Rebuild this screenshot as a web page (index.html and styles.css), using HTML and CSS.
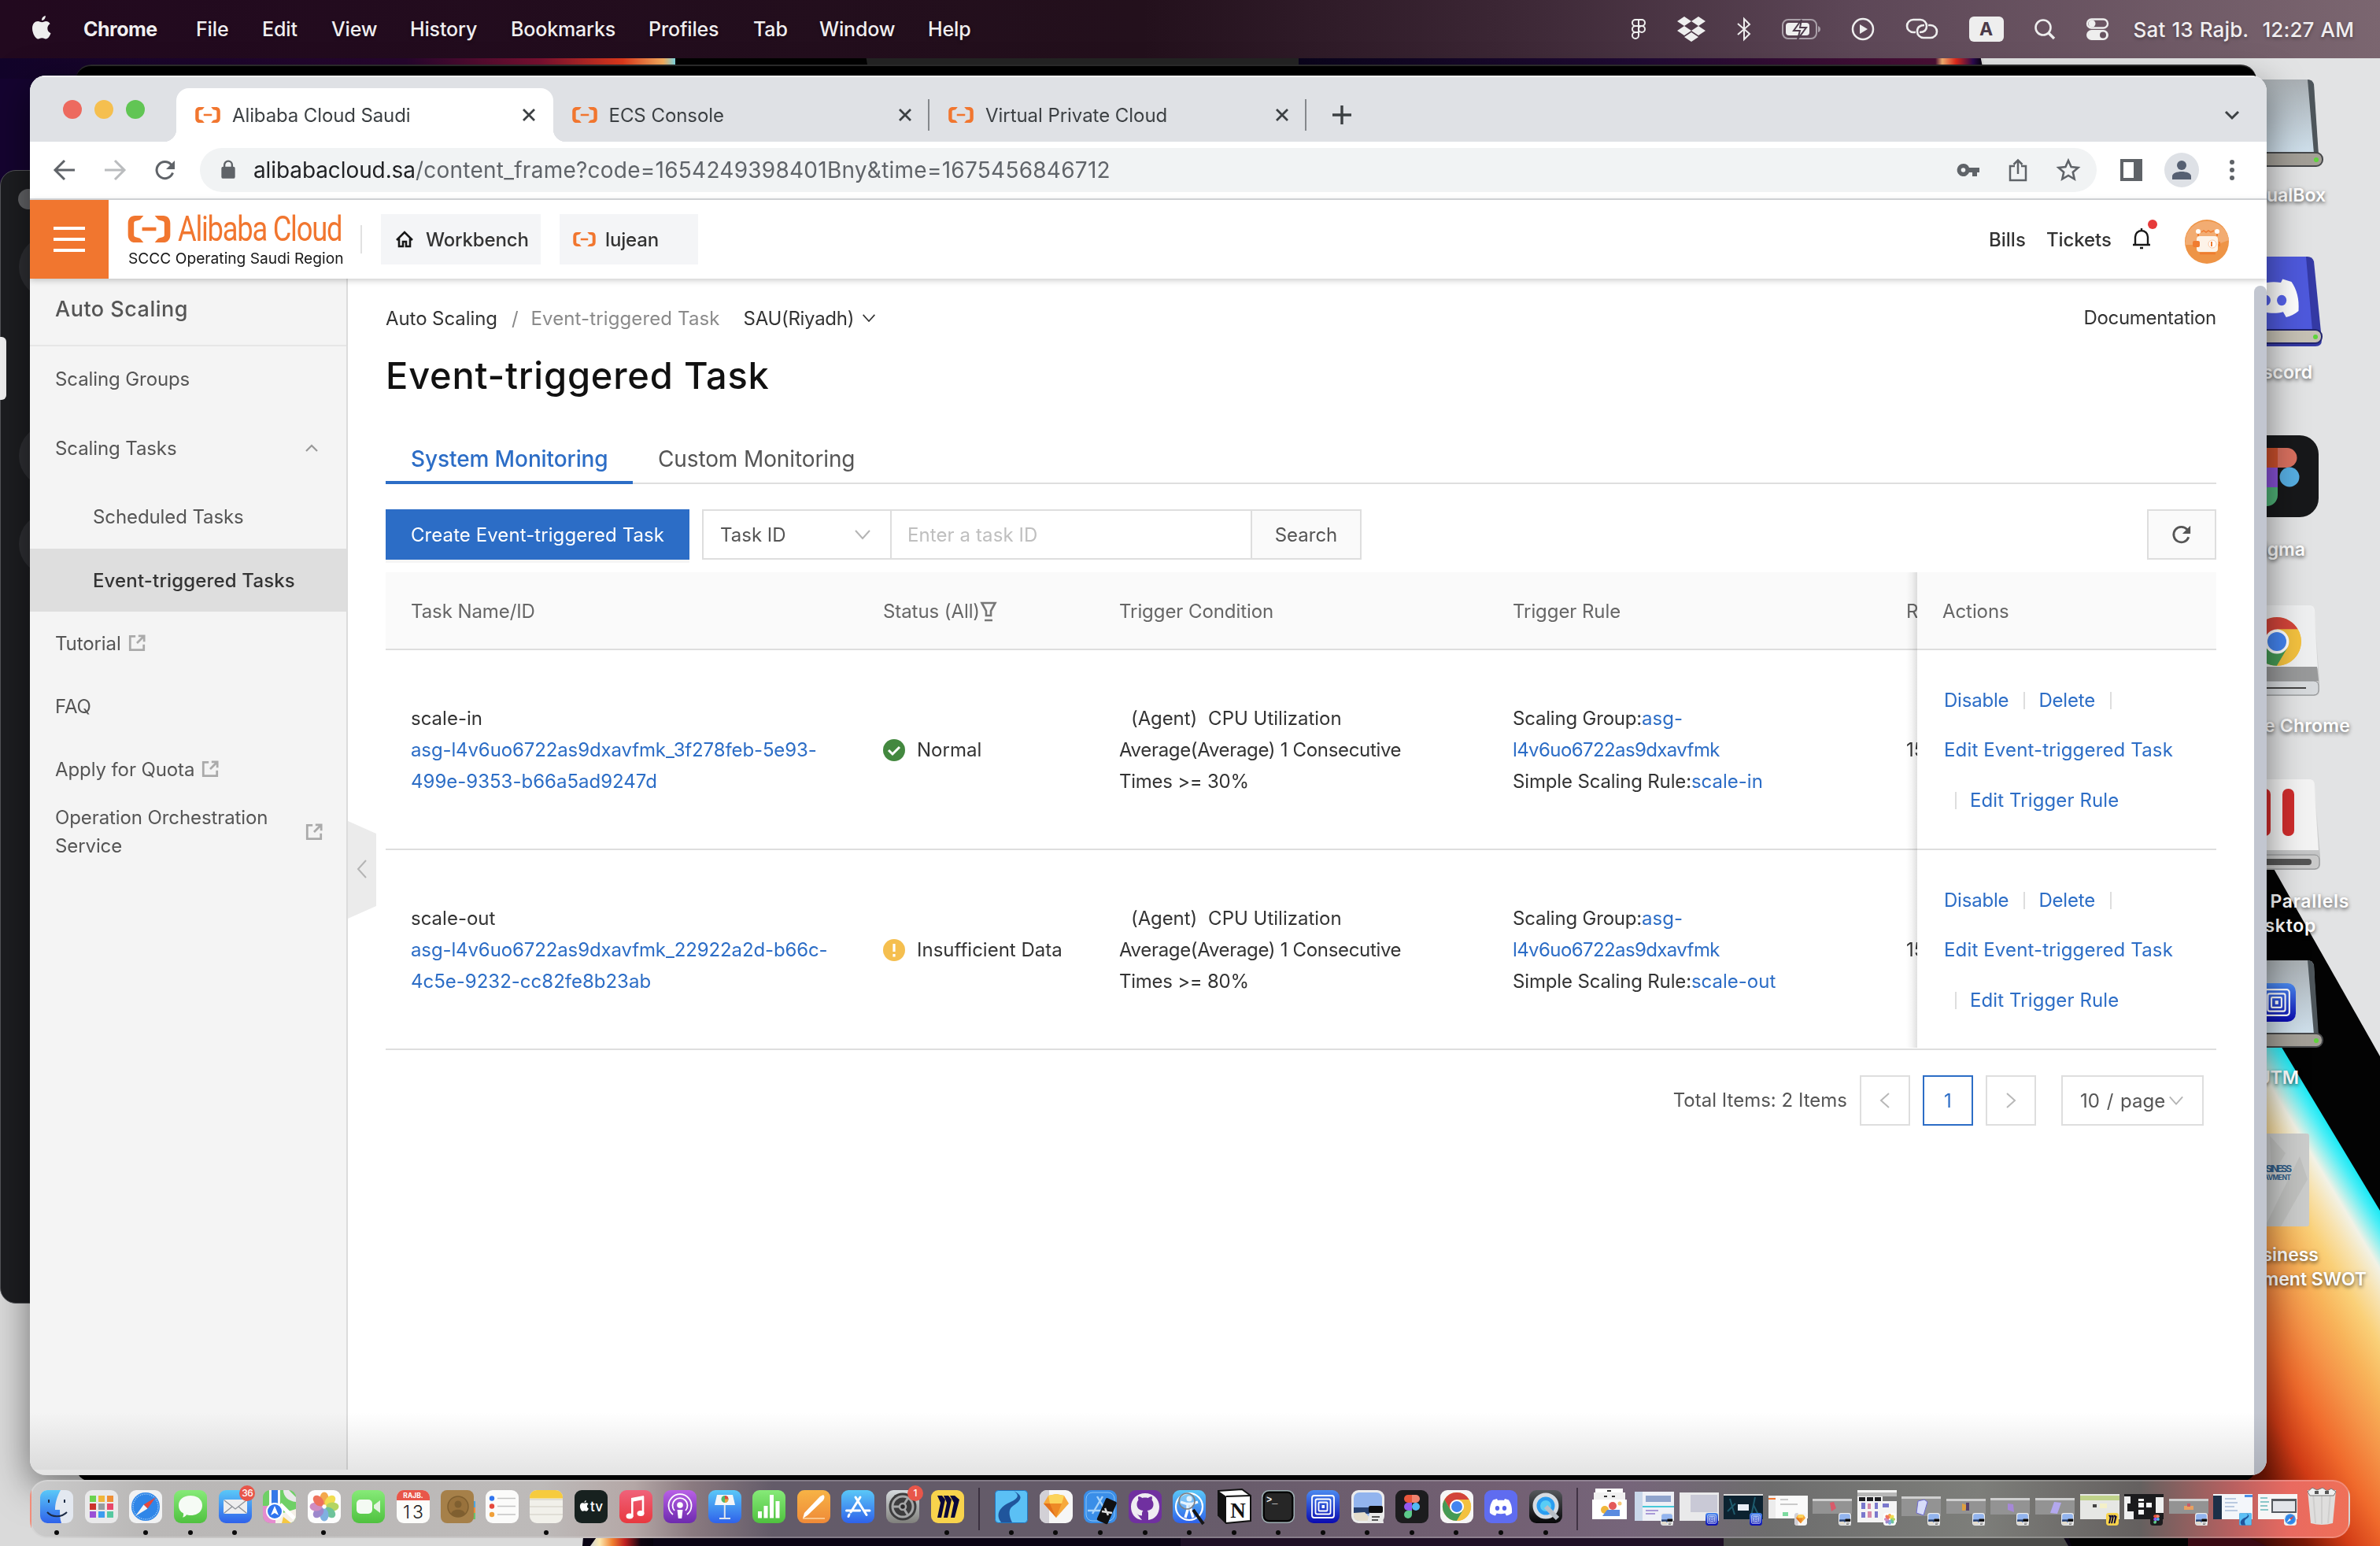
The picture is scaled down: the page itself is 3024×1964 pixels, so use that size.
FILE: index.html
```html
<!DOCTYPE html>
<html lang="en">
<head>
<meta charset="utf-8">
<title>Alibaba Cloud Saudi</title>
<link rel="stylesheet" href="styles.css">
</head>
<body>
<svg class="defs" width="0" height="0" aria-hidden="true">
  <defs>
    <linearGradient id="gBlue" x2="0" y2="1"><stop offset="0" stop-color="#5ac8f8"/><stop offset="1" stop-color="#2f62ea"/></linearGradient>
    <linearGradient id="gGreen" x2="0" y2="1"><stop offset="0" stop-color="#86ea78"/><stop offset="1" stop-color="#4fc13f"/></linearGradient>
    <linearGradient id="gRed" x2="0" y2="1"><stop offset="0" stop-color="#f0627a"/><stop offset="1" stop-color="#e8383f"/></linearGradient>
    <linearGradient id="gPurple" x2="0" y2="1"><stop offset="0" stop-color="#b860e6"/><stop offset="1" stop-color="#6d2aae"/></linearGradient>
    <linearGradient id="gOrange" x2="0" y2="1"><stop offset="0" stop-color="#f7b345"/><stop offset="1" stop-color="#ef8a38"/></linearGradient>
    <linearGradient id="gUtm" x2="0" y2="1"><stop offset="0" stop-color="#4a8af0"/><stop offset="1" stop-color="#0a0ab0"/></linearGradient>
    <linearGradient id="gMetal" x2="0" y2="1"><stop offset="0" stop-color="#d5dadd"/><stop offset="1" stop-color="#80807c"/></linearGradient>
    <linearGradient id="gDark" x2="0" y2="1"><stop offset="0" stop-color="#55585c"/><stop offset="1" stop-color="#060608"/></linearGradient>
    <linearGradient id="gDrive" x2="0" y2="1"><stop offset="0" stop-color="#a9afb3"/><stop offset="1" stop-color="#cfe0ec"/></linearGradient>
    <linearGradient id="gPlastic" x2="0" y2="1"><stop offset="0" stop-color="#f4f4f4"/><stop offset="1" stop-color="#b9babb"/></linearGradient>
    <linearGradient id="gTop" gradientUnits="userSpaceOnUse" x1="0" y1="0" x2="860" y2="0"><stop offset="0" stop-color="#12042a"/><stop offset=".6" stop-color="#26062e"/><stop offset=".8" stop-color="#7a1030"/><stop offset=".92" stop-color="#e03a1c"/><stop offset=".98" stop-color="#f8b060"/><stop offset="1" stop-color="#70e0f8"/></linearGradient>
    <linearGradient id="gTop2" gradientUnits="userSpaceOnUse" x1="1650" y1="0" x2="2520" y2="0"><stop offset="0" stop-color="#0a041c"/><stop offset=".5" stop-color="#200a34"/><stop offset=".93" stop-color="#4a0f35"/><stop offset=".94" stop-color="#f6b070"/><stop offset=".96" stop-color="#e02a1c"/><stop offset=".985" stop-color="#2a0a50"/><stop offset="1" stop-color="#000"/></linearGradient>
    <linearGradient id="gBand" gradientUnits="userSpaceOnUse" x1="3024" y1="1538" x2="2697" y2="1733"><stop offset="0" stop-color="#18e8f4"/><stop offset=".03" stop-color="#4ceef6"/><stop offset=".1" stop-color="#f2f2e6"/><stop offset=".16" stop-color="#f8e2ae"/><stop offset=".23" stop-color="#fad078"/><stop offset=".32" stop-color="#f8b45a"/><stop offset=".42" stop-color="#f59448"/><stop offset=".54" stop-color="#f06a2c"/><stop offset=".66" stop-color="#d23c16"/><stop offset=".78" stop-color="#7a1806"/><stop offset="1" stop-color="#140208"/></linearGradient>
    <linearGradient id="gFoot" gradientUnits="userSpaceOnUse" x1="750" y1="0" x2="830" y2="0"><stop offset="0" stop-color="#d0d0d0"/><stop offset=".15" stop-color="#fbe8b0"/><stop offset=".35" stop-color="#f08030"/><stop offset=".55" stop-color="#c02020"/><stop offset=".8" stop-color="#100410"/><stop offset="1" stop-color="#06020c"/></linearGradient>

    <symbol id="ali" viewBox="2 1.500 30 19"><path d="M12 1.500H7C4 1.500 2 3.500 2 7v8c0 3.500 2 5.500 5 5.500h6l-2.500-3-3-.8c-.9-.2-1.300-.7-1.300-1.500V6.800c0-.8.400-1.300 1.300-1.500l3-.8 2.500-3zM22 1.500h5c3 0 5 2 5 5.500v8c0 3.500-2 5.500-5 5.500h-6l2.500-3 3-.8c.9-.2 1.300-.7 1.300-1.500V6.800c0-.8-.4-1.300-1.300-1.500l-3-.8-2.500-3zM12 9.800h10v2.400H12z" fill="#f1762f"/></symbol>
    <symbol id="x" viewBox="0 0 18 18"><path d="M2 2l14 14M16 2L2 16" stroke="#3c4043" stroke-width="2.800"/></symbol>
    <symbol id="down" viewBox="0 0 22 14"><path d="M2 2l9 10 9-10" fill="none" stroke="currentColor" stroke-width="2"/></symbol>
    <symbol id="left" viewBox="0 0 14 22"><path d="M12 2L2 11l10 9" fill="none" stroke="currentColor" stroke-width="2"/></symbol>
    <symbol id="ext" viewBox="0 0 24 24"><path d="M10 2.500H2.500v19h19V14M14 2h8v8M21 3l-9 9" fill="none" stroke="#aaa" stroke-width="3"/></symbol>
    <symbol id="reload" viewBox="0 0 28 28"><path d="M23.500 17.500A10.500 10.500 0 1 1 21.500 7.200l2 2.300" fill="none" stroke="currentColor" stroke-width="3"/><path d="M26 2v11H15z" fill="currentColor"/></symbol>
    <symbol id="apple" viewBox="0 0 26 32"><path d="M18.500 8c-2.300 0-3.800 1.300-5.200 1.300S10.200 8 8.200 8C4.500 8 1 11.200 1 17c0 6.500 4.300 13.500 7.500 13.500 1.800 0 2.700-1.200 4.900-1.200 2.200 0 2.900 1.200 4.800 1.200 2.800 0 5.500-4.600 6.300-7.300-2.800-1.200-4.200-3.300-4.200-6.100 0-2.500 1.300-4.600 3.300-5.900C22.300 9 20.600 8 18.500 8zM17.800 1c-2.700.4-5 2.900-4.700 6 2.700 0 5-2.900 4.700-6z" fill="currentColor"/></symbol>
    <symbol id="utmI" viewBox="0 0 42 42"><rect width="42" height="42" rx="9" fill="url(#gUtm)"/><g fill="none" stroke="#fff" stroke-width="1.800"><rect x="7" y="7" width="28" height="28" rx="3"/><rect x="11.500" y="11.500" width="19" height="19" rx="2"/><rect x="15.500" y="15.500" width="11" height="11" rx="1"/></g><rect x="19.500" y="19" width="3.500" height="4" fill="#fff"/></symbol>
    <symbol id="prevI" viewBox="0 0 42 42"><rect width="42" height="42" rx="9" fill="#ececec"/><rect x="3" y="3" width="36" height="36" rx="7" fill="#92b4ee"/><path d="M3 22h36v8H3z" fill="#27406f"/><path d="M3 29l14-1 10 11H10q-7 0-7-7z" fill="#e4dccb"/><path d="M23 20h16v9l2 13H20l3-13z" fill="#e8e8e8"/><rect x="22" y="20" width="18" height="9" rx="2" fill="#0c0c0e"/><path d="M26 34h10M26 38h8" stroke="#555" stroke-width="2"/></symbol>
    <symbol id="figI" viewBox="0 0 42 42"><rect width="42" height="42" rx="9" fill="#1c1c1e"/><path d="M21 6h-5a5 5 0 0 0 0 10h5z" fill="#e9573c"/><path d="M21 6h5a5 5 0 0 1 0 10h-5z" fill="#f0836f"/><path d="M21 16h-5a5 5 0 0 0 0 10h5z" fill="#9459ee"/><circle cx="26" cy="21" r="5" fill="#53b8f2"/><path d="M21 26h-5a5 5 0 1 0 5 5z" fill="#5cc98a"/></symbol>
    <symbol id="sketchI" viewBox="0 0 42 42"><rect width="42" height="42" rx="9" fill="#f6f6f6"/><path d="M0 9a9 9 0 0 1 9-9h3v42H9a9 9 0 0 1-9-9z" fill="#d2d0d6"/><path d="M11 7l10-2 10 2 6 10-16 18L5 17z" fill="#f7a93b"/><path d="M11 7l10-2 10 2-3 10H13z" fill="#fcd45a"/><path d="M13 17h15l-7 18z" fill="#ee8a26"/><path d="M5 17h8l8 18z" fill="#e2701c"/></symbol>
    <symbol id="miroI" viewBox="0 0 42 42"><rect width="42" height="42" rx="9" fill="#f8d34c"/><path d="M8 7h6l4 5-5 23H8l4-19zM16 7h6l4 5-5 23h-5l4-19zM24 7h6l6 5-6 23h-5l4-19z" fill="#0a083a"/></symbol>
    <symbol id="codeI" viewBox="0 0 42 42"><rect x=".5" y=".5" width="41" height="41" rx="4" fill="#5bc0f5" stroke="#2177c0"/><path d="M24 1c16 8 6 14-2 20-5 4-4 12 0 20H8C1 32 5 23 16 17c11-5 18-9 8-16z" fill="#20559c"/></symbol>
    <symbol id="safI" viewBox="0 0 42 42"><rect width="42" height="42" rx="9" fill="#f1f2f3"/><circle cx="21" cy="21" r="18" fill="#2f86e8"/><circle cx="21" cy="21" r="16" fill="none" stroke="#a9d2f8" stroke-width="1.500" stroke-dasharray="1 1.500"/><path d="M34 9L18.500 18.500l5 5z" fill="#e5483c"/><path d="M8 33l10.500-14.500 5 5z" fill="#f4f4f4"/></symbol>
    <symbol id="phI" viewBox="0 0 42 42"><rect width="42" height="42" rx="9" fill="#fdfdfd"/><g opacity=".85"><ellipse cx="21" cy="10.500" rx="5.500" ry="8" fill="#f29a2e"/><ellipse cx="21" cy="10.500" rx="5.500" ry="8" fill="#f0d832" transform="rotate(45 21 21)"/><ellipse cx="21" cy="10.500" rx="5.500" ry="8" fill="#a8cf48" transform="rotate(90 21 21)"/><ellipse cx="21" cy="10.500" rx="5.500" ry="8" fill="#56b98a" transform="rotate(135 21 21)"/><ellipse cx="21" cy="10.500" rx="5.500" ry="8" fill="#6aa3dc" transform="rotate(180 21 21)"/><ellipse cx="21" cy="10.500" rx="5.500" ry="8" fill="#8d74c4" transform="rotate(225 21 21)"/><ellipse cx="21" cy="10.500" rx="5.500" ry="8" fill="#c87ab8" transform="rotate(270 21 21)"/><ellipse cx="21" cy="10.500" rx="5.500" ry="8" fill="#ec5a42" transform="rotate(315 21 21)"/></g></symbol>
    <symbol id="chr" viewBox="0 0 42 42"><circle cx="21" cy="21" r="18" fill="#e8b73a"/><path d="M5.400 12A18 18 0 0 1 36.600 12H21l-8 13.500z" fill="#d2443a"/><path d="M5.400 12A18 18 0 0 0 21 39l8-13.500H13z" fill="#459a55"/><path d="M21 39A18 18 0 0 0 36.600 12H21l8 13.500z" fill="#f3c13f"/><circle cx="21" cy="21" r="9" fill="#fff"/><circle cx="21" cy="21" r="7" fill="#4384f0"/></symbol>
    <symbol id="disc" viewBox="0 0 30 24"><path d="M10 2L5 3.500C2 8 .5 13 1 20c2 1.800 4.500 3 7 3.500l1.700-3c3.500 1 7.100 1 10.600 0l1.700 3c2.500-.5 5-1.700 7-3.500.5-7-1-12-4-16.500L20 2l-1 2c-2.700-.4-5.300-.4-8 0z" fill="#fff"/><ellipse cx="10.500" cy="14" rx="2.700" ry="3" fill="#5562ea"/><ellipse cx="19.500" cy="14" rx="2.700" ry="3" fill="#5562ea"/></symbol>
  </defs>
</svg>

<div class="desktop">
  <svg class="wallpaper" viewBox="0 0 3024 1964">
    <rect width="3024" height="1964" fill="#dadada"/>
    <path d="M0 0h160v430H0z" fill="#150430"/>
    <path d="M0 70h860v30H0z" fill="url(#gTop)"/>
    <path d="M858 70h800v30H858z" fill="#020202"/>
    <path d="M1100 70h550v30h-545z" fill="#242424"/>
    <path d="M1650 70h866l6 30H1650z" fill="url(#gTop2)"/>
    <path d="M2520 70h504v1300H2600z" fill="#e2e3e4"/>
    <path d="M2700 770L3024 1342V1560L2880 1420z" fill="#030303"/>
    <path d="M2800 1166L3024 1538V1964H2800z" fill="url(#gBand)"/>
    <path d="M750 1850h2050v114H740z" fill="#0a0414"/>
    <path d="M760 1950h70v14h-80z" fill="url(#gFoot)"/>
    <path d="M1500 1950h700v14h-700z" fill="#1f1026"/>
    <path d="M2190 1950h430l8 14h-438z" fill="#4a4a48"/>
    <path d="M2627 1950h160v14h-155z" fill="#030303"/>
    <path d="M2780 1950h70l30 14h-100z" fill="#3a0a14"/>
  </svg>

  <div class="shortcut s1"><svg viewBox="0 0 130 120"><path d="M0 4h110q6 0 8 6l4 88H0z" fill="url(#gDrive)"/><path d="M110 4q6 0 8 6l6 90-6-2z" fill="#4d555a"/><rect x="-20" y="97" width="149" height="17" rx="8" fill="#a39f97" stroke="#46484a" stroke-width="2"/><circle cx="121" cy="106" r="3" fill="#5fd43c"/></svg><p>VirtualBox</p></div>
  <div class="shortcut s2"><svg viewBox="0 0 130 120"><path d="M0 4h110q6 0 8 6l10 100q0 8-8 8H0z" fill="#3439a4"/><path d="M0 4h108l8 94H0z" fill="#4e59dc"/><use href="#disc" x="30" y="28" width="74" height="54"/><rect x="-20" y="97" width="148" height="17" rx="8" fill="#c5c0b4" stroke="#22256e" stroke-width="2"/><circle cx="120" cy="106" r="3" fill="#5fd43c"/></svg><p>Discord</p></div>
  <div class="shortcut s3"><svg viewBox="0 0 130 120"><rect x="0" y="8" width="124" height="104" rx="24" fill="#17181a"/><path d="M72 24h12a12 12 0 0 1 0 25H72z" fill="#d9705f"/><path d="M72 24H50v25h22z" fill="#c94f2c"/><path d="M50 49h22v25H50z" fill="#8650d4"/><circle cx="87" cy="61" r="12.500" fill="#57aee2"/><path d="M50 74h22v10a14 14 0 0 1-14 14z" fill="#4fb277"/></svg><p>Figma</p></div>
  <div class="shortcut s4"><svg viewBox="0 0 130 120"><path d="M0 2h112q6 0 7 6l6 92v10q0 7-7 7H0z" fill="url(#gPlastic)"/><path d="M0 2h112q5 0 6 6l5 74H0z" fill="#eeeff0"/><path d="M0 80h122l2 18H0z" fill="#98999a"/><rect x="-20" y="98" width="144" height="18" rx="6" fill="#d6d9dc" stroke="#8c8e90"/><path d="M0 107h108" stroke="#444" stroke-width="2"/><use href="#chr" x="35" y="12" width="72" height="72"/></svg><p>Google Chrome</p></div>
  <div class="shortcut s5"><svg viewBox="0 0 130 120"><path d="M0 2h112q6 0 7 6l7 92v10q0 7-7 7H0z" fill="url(#gPlastic)"/><path d="M0 2h112q5 0 6 6l6 84H0z" fill="#f3f3f3"/><rect x="48" y="14" width="15" height="60" rx="7" fill="#cf2c2c"/><rect x="78" y="14" width="15" height="60" rx="7" fill="#cf2c2c"/><rect x="-20" y="98" width="145" height="18" rx="6" fill="#c9c9c9" stroke="#8c8e90"/><rect x="-10" y="103" width="125" height="8" rx="4" fill="#555"/></svg><p>Parallels<br><span class="nudge">Desktop</span></p></div>
  <div class="shortcut s6"><svg viewBox="0 0 130 120"><path d="M0 4h110q6 0 8 6l4 88H0z" fill="url(#gDrive)"/><path d="M110 4q6 0 8 6l6 90-6-2z" fill="#4d555a"/><use href="#utmI" x="46" y="33" width="49" height="49"/><rect x="-20" y="97" width="149" height="17" rx="8" fill="#a39f97" stroke="#46484a" stroke-width="2"/><circle cx="121" cy="106" r="3" fill="#5fd43c"/></svg><p>UTM</p></div>
  <div class="shortcut s7"><svg viewBox="0 0 130 120"><rect x="0" y="1" width="112" height="118" rx="3" fill="#cbcccb"/><path d="M62 4l20 22-18 30zM100 30l-44 89h20l34-60z" fill="#c0c1bf"/><text x="50" y="50" font-size="12" font-weight="700" fill="#2f5c86" textLength="40">USINESS</text><text x="50" y="60" font-size="8.500" font-weight="700" fill="#2f5c86" textLength="39">EAVMENT</text></svg><p><span class="nudge2">Business</span><br>ment SWOT</p></div>

  <div class="back-window"></div>
  <div class="side-window"><i></i><i></i><i></i><i></i></div>
  <div class="side-pill"></div>

  <header class="menubar">
    <nav class="menu">
      <svg class="apple" viewBox="0 0 26 32"><use href="#apple"/></svg>
      <b>Chrome</b><span>File</span><span>Edit</span><span>View</span><span>History</span><span>Bookmarks</span><span>Profiles</span><span>Tab</span><span>Window</span><span>Help</span>
    </nav>
    <div class="tray">
      <svg width="20" height="28" viewBox="0 0 20 28" fill="none" stroke="#eee" stroke-width="2"><path d="M10 2H6a4 4 0 0 0 0 8h4zM10 2h4a4 4 0 0 1 0 8h-4zM10 10H6a4 4 0 0 0 0 8h4zM10 18H6a4 4 0 1 0 4 4z"/><circle cx="14" cy="14" r="4"/></svg>
      <svg width="38" height="32" viewBox="0 0 38 32" fill="#eee"><path d="M10 0l9 6-9 6-9-6zM28 0l9 6-9 6-9-6zM10 12l9 6-9 6-9-6zM28 12l9 6-9 6-9-6zM19 20l9 6-9 6-9-6z"/></svg>
      <svg width="20" height="30" viewBox="0 0 20 30" fill="none" stroke="#eee" stroke-width="2"><path d="M2 8l15 13-7 7V2l7 7L2 22"/></svg>
      <svg width="50" height="26" viewBox="0 0 50 26"><rect x="1" y="1" width="43" height="24" rx="7" fill="none" stroke="#a99fa8" stroke-width="2"/><rect x="5" y="5" width="30" height="16" rx="4" fill="#eee"/><path d="M46 9v8q3-1 3-4t-3-4z" fill="#a99fa8"/><path d="M25 1L15 15h8l-3 11 11-15h-8z" fill="#eee" stroke="#4d3b4b" stroke-width="2"/></svg>
      <svg width="30" height="30" viewBox="0 0 30 30"><circle cx="15" cy="15" r="13" fill="none" stroke="#eee" stroke-width="2.500"/><path d="M11 9l10 6-10 6z" fill="#eee"/></svg>
      <svg width="44" height="28" viewBox="0 0 44 28" fill="none" stroke="#eee" stroke-width="2.600"><path d="M14 18h-3a8 8 0 0 1 0-16h9a8 8 0 0 1 8 8q0 8-9 8"/><path d="M30 9h3a8 8 0 0 1 0 16h-9a8 8 0 0 1-8-8q0-8 9-8"/></svg>
      <span class="lang">A</span>
      <svg width="28" height="28" viewBox="0 0 28 28" fill="none" stroke="#eee" stroke-width="2.600"><circle cx="12" cy="12" r="9.500"/><path d="M19 19l7 7" stroke-width="3.400"/></svg>
      <svg width="30" height="28" viewBox="0 0 30 28"><rect x="2" y="1.500" width="26" height="11" rx="5.500" fill="none" stroke="#eee" stroke-width="2.400"/><circle cx="8" cy="7" r="4.500" fill="#eee"/><rect x="1" y="15" width="28" height="13" rx="6.500" fill="#eee"/><circle cx="22" cy="21.500" r="4" fill="#66525f"/></svg>
    </div>
    <div class="clock"><span>Sat 13 Rajb.</span><span>12:27 AM</span></div>
  </header>

  <main class="window">
    <div class="tabstrip">
      <div class="lights"><i class="r"></i><i class="y"></i><i class="g"></i></div>
      <div class="tab active"><svg class="fav"><use href="#ali"/></svg><span class="t1">Alibaba Cloud Saudi</span><svg class="close"><use href="#x"/></svg></div>
      <div class="tab"><svg class="fav"><use href="#ali"/></svg><span>ECS Console</span><svg class="close"><use href="#x"/></svg></div>
      <div class="tab"><svg class="fav"><use href="#ali"/></svg><span>Virtual Private Cloud</span><svg class="close"><use href="#x"/></svg></div>
      <svg class="plus" viewBox="0 0 24 24"><path d="M12 0v24M0 12h24" stroke="#3c4043" stroke-width="3.400"/></svg>
      <svg class="tabs-more" viewBox="0 0 18 12"><path d="M1 2l8 8 8-8" fill="none" stroke="#3c4043" stroke-width="3"/></svg>
    </div>
    <div class="toolbar">
      <div class="navs">
        <svg viewBox="0 0 28 28"><path d="M27 14H3M14 2L2 14l12 12" fill="none" stroke="#5f6368" stroke-width="3"/></svg>
        <svg viewBox="0 0 28 28"><path d="M1 14h24M14 2l12 12-12 12" fill="none" stroke="#babcbe" stroke-width="3"/></svg>
        <svg class="rl" viewBox="0 0 28 28"><use href="#reload"/></svg>
      </div>
      <div class="omnibox">
        <svg class="lock" viewBox="0 0 18 24"><rect x="1" y="8" width="16" height="14" rx="2" fill="#5f6368"/><path d="M4.500 9V6a4.500 4.500 0 0 1 9 0v3" fill="none" stroke="#5f6368" stroke-width="2.200"/></svg>
        <span class="url"><b>alibabacloud.sa</b>/content_frame?code=1654249398401Bny&amp;time=1675456846712</span>
        <svg class="key" viewBox="0 0 30 18"><path d="M8.500 1a8 8 0 1 0 7.500 11h4v5h6v-5h3V6H16a8 8 0 0 0-7.500-5zm0 5.200a2.800 2.800 0 1 1 0 5.600 2.800 2.800 0 0 1 0-5.600z" fill="#5f6368"/></svg>
        <svg class="share" viewBox="0 0 24 30"><path d="M8 10H2v18h20V10h-6M12 20V3M6.500 8L12 2.500 17.500 8" fill="none" stroke="#5f6368" stroke-width="2.500"/></svg>
        <svg class="star" viewBox="0 0 30 30"><path d="M15 3l3.600 8.100 8.800.8-6.600 5.900 1.900 8.700L15 22l-7.700 4.500 1.900-8.700-6.600-5.900 8.800-.8z" fill="none" stroke="#5f6368" stroke-width="2.600"/></svg>
      </div>
      <svg class="panel" viewBox="0 0 28 28"><path d="M0 0h28v28H0zM4 4v20h13V4z" fill="#5f6368" fill-rule="evenodd"/></svg>
      <span class="user"><svg viewBox="0 0 24 24"><circle cx="12" cy="6" r="6" fill="#566072"/><path d="M0 24v-4c0-8 24-8 24 0v4z" fill="#566072"/></svg></span>
      <svg class="dots" viewBox="0 0 6 26"><circle cx="3" cy="3" r="3"/><circle cx="3" cy="13" r="3"/><circle cx="3" cy="23" r="3"/></svg>
    </div>

    <div class="appbar">
      <div class="burger"><i></i><i></i><i></i></div>
      <div class="brand">
        <div class="logo"><svg><use href="#ali"/></svg><span>Alibaba Cloud</span></div>
        <div class="region">SCCC Operating Saudi Region</div>
      </div>
      <div class="sep"></div>
      <div class="chip wb"><svg viewBox="0 0 24 24"><path d="M2 13L12 3l10 10M5 11v10h5v-6h4v6h5V11" fill="none" stroke="#181818" stroke-width="2.600"/></svg>Workbench</div>
      <div class="chip lj"><svg><use href="#ali"/></svg>lujean</div>
      <div class="spacer"></div>
      <div class="link bills">Bills</div><div class="link tickets">Tickets</div>
      <div class="bell"><svg viewBox="0 0 24 28"><path d="M4 22V12a8 8 0 0 1 16 0v10M1 22h22M12 1v3M10 26h4" fill="none" stroke="#181818" stroke-width="2.400"/></svg><i></i></div>
      <svg class="ava" viewBox="0 0 56 56"><circle cx="28" cy="28" r="28" fill="#ee9446"/><path d="M2 20A28 28 0 0 1 56 26L40 32 0 32z" fill="#f2ac72"/><rect x="15" y="21" width="27" height="20" rx="4" fill="#fdf3e8"/><path d="M17 21v-5M41 21v-5" stroke="#f07c30" stroke-width="2"/><circle cx="17" cy="15" r="3" fill="#fff"/><circle cx="41" cy="15" r="3" fill="#fff"/><path d="M21 16l3-2 3 2 3-2 3 2 4-2" fill="none" stroke="#f07c30" stroke-width="1.500"/><rect x="10" y="27" width="9" height="8" rx="2" fill="#f07c30"/><circle cx="35" cy="31" r="5" fill="#fff" stroke="#f9c8a4"/><path d="M34 28v6M44 28v6" stroke="#f07c30" stroke-width="2"/><path d="M19 43h20" stroke="#f07c30" stroke-width="2.500"/></svg>
    </div>

    <div class="body">
      <aside class="sidebar">
        <div class="side-title">Auto Scaling</div>
        <div class="item first">Scaling Groups</div>
        <div class="item second between"><span>Scaling Tasks</span><svg class="caret" viewBox="0 0 16 10"><path d="M1 9l7-7 7 7" fill="none" stroke="#999" stroke-width="2.200"/></svg></div>
        <div class="item third sub">Scheduled Tasks</div>
        <div class="item sub on">Event-triggered Tasks</div>
        <div class="item">Tutorial <svg class="ext"><use href="#ext"/></svg></div>
        <div class="item">FAQ</div>
        <div class="item">Apply for Quota <svg class="ext"><use href="#ext"/></svg></div>
        <div class="item two between"><span>Operation Orchestration<br>Service</span><svg class="ext"><use href="#ext"/></svg></div>
      </aside>
      <section class="content">
        <div class="crumbs"><span>Auto Scaling</span><i>/</i><em>Event-triggered Task</em><span class="reg">SAU(Riyadh)</span><svg><use href="#down"/></svg><a>Documentation</a></div>
        <h1>Event-triggered Task</h1>
        <div class="tabs"><span class="cur">System Monitoring</span><span>Custom Monitoring</span></div>
        <div class="filters">
          <button class="primary">Create Event-triggered Task</button>
          <div class="select"><span>Task ID</span><svg><use href="#down"/></svg></div>
          <div class="input">Enter a task ID</div>
          <div class="search">Search</div>
          <div class="refresh"><svg viewBox="0 0 28 28"><use href="#reload"/></svg></div>
        </div>
        <div class="table">
          <div class="row head">
            <div>Task Name/ID</div>
            <div class="st">Status (All)<svg viewBox="0 0 20 26"><path d="M1.500 2h17l-5.500 10v6H7v-6zM5 24h10" fill="none" stroke="#777" stroke-width="2.600"/></svg></div>
            <div>Trigger Condition</div><div>Trigger Rule</div><div class="cut">R</div>
            <div class="act"><span class="ah">Actions</span></div>
          </div>
          <div class="row">
            <div><p>scale-in<br><a class="id1">asg-l4v6uo6722as9dxavfmk_3f278feb-5e93-</a><br><a>499e-9353-b66a5ad9247d</a></p></div>
            <div class="st"><svg class="dot" viewBox="0 0 28 28"><circle cx="14" cy="14" r="14" fill="#43883f"/><path d="M7 14l5 5 9-9" fill="none" stroke="#fff" stroke-width="3"/></svg>Normal</div>
            <div><p><span class="ag">(Agent)</span>CPU Utilization<br><span class="tight">Average(Average) 1 Consecutive</span><br><span class="times">Times &gt;= 30%</span></p></div>
            <div><p><span class="sg">Scaling Group:</span><a>asg-</a><br><a class="gid">l4v6uo6722as9dxavfmk</a><br><span class="sr">Simple Scaling Rule:</span><a>scale-in</a></p></div>
            <div class="cut">15</div>
            <div class="act"><div class="al"><a>Disable</a><i></i><a>Delete</a><i></i></div><div class="al wide"><a>Edit Event-triggered Task</a></div><div class="al last"><i></i><a>Edit Trigger Rule</a></div></div>
          </div>
          <div class="row">
            <div><p>scale-out<br><a class="id1">asg-l4v6uo6722as9dxavfmk_22922a2d-b66c-</a><br><a>4c5e-9232-cc82fe8b23ab</a></p></div>
            <div class="st"><svg class="dot" viewBox="0 0 28 28"><circle cx="14" cy="14" r="14" fill="#f5bf4f"/><path d="M14 6v10M14 19v3.500" stroke="#fff" stroke-width="3.200"/></svg>Insufficient Data</div>
            <div><p><span class="ag">(Agent)</span>CPU Utilization<br><span class="tight">Average(Average) 1 Consecutive</span><br><span class="times">Times &gt;= 80%</span></p></div>
            <div><p><span class="sg">Scaling Group:</span><a>asg-</a><br><a class="gid">l4v6uo6722as9dxavfmk</a><br><span class="sr">Simple Scaling Rule:</span><a>scale-out</a></p></div>
            <div class="cut">15</div>
            <div class="act"><div class="al"><a>Disable</a><i></i><a>Delete</a><i></i></div><div class="al wide"><a>Edit Event-triggered Task</a></div><div class="al last"><i></i><a>Edit Trigger Rule</a></div></div>
          </div>
          <div class="fixed-shadow"></div>
        </div>
        <div class="pager">
          <span class="total">Total Items: 2 Items</span>
          <div class="pg"><svg><use href="#left"/></svg></div><div class="pg cur">1</div><div class="pg next"><svg><use href="#left"/></svg></div>
          <div class="size"><span>10 / page</span><svg><use href="#down"/></svg></div>
        </div>
      </section>
      <svg class="handle" viewBox="0 0 36 124"><path d="M0 0l36 16v92L0 124z" fill="#ebebeb"/><path d="M23 50L13 61l10 11" fill="none" stroke="#b4b4b4" stroke-width="2"/></svg>
      <div class="scrollbar"></div>
      <div class="fade"></div>
    </div>
  </main>

  <footer class="dock">
    <div class="app run"><svg viewBox="0 0 42 42"><rect width="42" height="42" rx="9" fill="#e3e8f0"/><path d="M9 0h17c-5 9-7 17-7 25h6c0 6 0 11 2 17H9a9 9 0 0 1-9-9V9a9 9 0 0 1 9-9z" fill="url(#gBlue)"/><path d="M11 12v4M31 12v4M9 28c6 7 18 7 25 0" fill="none" stroke="#1c2b44" stroke-width="2"/></svg></div>
    <div class="app"><svg viewBox="0 0 42 42"><rect width="42" height="42" rx="9" fill="#e9e9ea"/><path d="M6 7h8v8H6z" fill="#6bd24f"/><path d="M17 7h8v8h-8z" fill="#f0b63a"/><path d="M28 7h8v8h-8z" fill="#ef8e35"/><path d="M6 17h8v8H6z" fill="#cc322c"/><path d="M17 17h8v8h-8z" fill="#989ca0"/><path d="M28 17h8v8h-8z" fill="#e8476a"/><path d="M6 27h8v8H6z" fill="#9a4fd6"/><path d="M17 27h8v8h-8z" fill="#3d9cf0"/><path d="M28 27h8v8h-8z" fill="#56c8a0"/></svg></div>
    <div class="app run"><svg><use href="#safI"/></svg></div>
    <div class="app run"><svg viewBox="0 0 42 42"><rect width="42" height="42" rx="9" fill="url(#gGreen)"/><path d="M21 7c9 0 15 5 15 12.500S30 32 21 32c-2 0-4-.3-5-.7-1 2-3 3-5 3.200 1-1.500 1.300-3 1-5C8 27.500 6 24 6 19.500 6 12 12 7 21 7z" fill="#f6fbf5"/></svg></div>
    <div class="app run"><svg viewBox="0 0 42 42"><rect width="42" height="42" rx="9" fill="url(#gBlue)"/><rect x="6" y="12" width="30" height="18" rx="2" fill="#eee"/><path d="M7 13l14 11 14-11M7 29l10-8M35 29l-10-8" fill="none" stroke="#8c9096" stroke-width="1.300"/></svg><b class="badge">36</b></div>
    <div class="app"><svg viewBox="0 0 42 42"><rect width="42" height="42" rx="9" fill="#6fd066"/><path d="M0 20h16v22H9a9 9 0 0 1-9-9z" fill="#e58ccf"/><path d="M16 32l26-8v9a9 9 0 0 1-9 9H16z" fill="#f6f1e8"/><path d="M26 34l10 8H24z" fill="#f5c842"/><path d="M8 0h14v24H8z" fill="#f6f6f6"/><path d="M11 0h8v24h-8z" fill="#3478e8"/><path d="M26 0c0 8 6 14 16 15V9l-9-9z" fill="#e9e9e9"/><path d="M22 18l18 18" stroke="#fff" stroke-width="5"/><circle cx="15" cy="27" r="11" fill="#fff"/><circle cx="15" cy="27" r="9" fill="#2f74ee"/><path d="M15 20l5 12-5-3-5 3z" fill="#fff"/></svg></div>
    <div class="app run"><svg><use href="#phI"/></svg></div>
    <div class="app"><svg viewBox="0 0 42 42"><rect width="42" height="42" rx="9" fill="url(#gGreen)"/><rect x="6" y="12" width="20" height="18" rx="5" fill="#f4faf3"/><path d="M28 19l8-6v16l-8-6z" fill="#e4f3e1"/></svg></div>
    <div class="app"><svg viewBox="0 0 42 42"><rect width="42" height="42" rx="9" fill="#fcfcfa"/><path d="M0 13V9a9 9 0 0 1 9-9h24a9 9 0 0 1 9 9v4z" fill="#e8564a"/><text x="21" y="10" text-anchor="middle" font-size="8.500" font-weight="700" fill="#fff">RAJB.</text><text x="21" y="35.500" text-anchor="middle" font-size="23" font-weight="300" fill="#222" textLength="26">13</text></svg></div>
    <div class="app"><svg viewBox="0 0 42 42"><path d="M40 14h4v8h-4z" fill="#4aa3df"/><path d="M40 22h4v7h-4z" fill="#f08a3a"/><path d="M40 29h4v8h-4z" fill="#67c66a"/><rect width="42" height="42" rx="8" fill="#a68049"/><circle cx="22" cy="21" r="13" fill="#99723c" stroke="#7f5f30" stroke-width="1.500"/><circle cx="22" cy="18" r="4.500" fill="#7f5f30"/><path d="M13 30c2-7 16-7 18 0-5 5-13 5-18 0z" fill="#7f5f30"/></svg></div>
    <div class="app"><svg viewBox="0 0 42 42"><rect width="42" height="42" rx="9" fill="#fbfbfa"/><path d="M15 10.500h23M15 20.500h23M15 31h23" stroke="#c4c4c4" stroke-width="1.400"/><circle cx="8" cy="10.500" r="3.200" fill="#2f74ee"/><circle cx="8" cy="20.500" r="3.200" fill="#e5483c"/><circle cx="8" cy="31" r="3.200" fill="#f0a03a"/></svg></div>
    <div class="app run"><svg viewBox="0 0 42 42"><rect width="42" height="42" rx="9" fill="#f1f0ea"/><path d="M0 10.500V9a9 9 0 0 1 9-9h24a9 9 0 0 1 9 9v1.500z" fill="#f6cb3e"/><path d="M0 12h42M0 21h42M0 31h42" stroke="#cfccc2" stroke-width="1.200"/></svg></div>
    <div class="app"><svg viewBox="0 0 42 42"><rect width="42" height="42" rx="9" fill="#17211f"/><use href="#apple" x="6" y="12.500" width="13" height="15" color="#fff"/><text x="20" y="27" font-size="17" font-weight="500" fill="#fff" textLength="16">tv</text></svg></div>
    <div class="app"><svg viewBox="0 0 42 42"><rect width="42" height="42" rx="9" fill="url(#gRed)"/><path d="M15 10l16-3v5l-16 3z" fill="#fff"/><path d="M16.300 11v23M30 8v22" stroke="#fff" stroke-width="2.600"/><ellipse cx="13" cy="33" rx="4.500" ry="3.500" fill="#fff"/><ellipse cx="27" cy="29.500" rx="4.500" ry="3.500" fill="#fff"/></svg></div>
    <div class="app"><svg viewBox="0 0 42 42"><rect width="42" height="42" rx="9" fill="url(#gPurple)"/><g fill="none" stroke="#fff" stroke-width="1.800"><path d="M12 31A14.500 14.500 0 1 1 30 31M14 26a9.500 9.500 0 1 1 14 0"/></g><circle cx="21" cy="19" r="3.800" fill="#fff"/><path d="M17.500 25h7l-1.300 11h-4.400z" fill="#fff"/></svg></div>
    <div class="app"><svg viewBox="0 0 42 42"><rect width="42" height="42" rx="9" fill="url(#gBlue)"/><path d="M11 6h20l3 13H8z" fill="#f4f6f8"/><path d="M20.800 19v16M14 36h14" stroke="#dfe6ee" stroke-width="2"/><circle cx="21" cy="11.500" r="4.500" fill="#52b86a"/><path d="M21 7a4.500 4.500 0 0 1 4.500 4.500H21z" fill="#e5483c"/><path d="M21 11.500V16a4.500 4.500 0 0 0 4.500-4.500z" fill="#f0a03a"/></svg></div>
    <div class="app"><svg viewBox="0 0 42 42"><rect width="42" height="42" rx="9" fill="url(#gGreen)"/><path d="M7 27h5v8.500H7zM14.500 20h5v15.500h-5zM22 6h5v29.500h-5zM29.500 14h5v21.500h-5z" fill="#fff"/></svg></div>
    <div class="app"><svg viewBox="0 0 42 42"><rect width="42" height="42" rx="9" fill="url(#gOrange)"/><path d="M33 6q3 2 0 7L13 32l-6 4 2-7L29 8z" fill="#fff"/><path d="M7 36h28" stroke="#ffe2b4" stroke-width="1.300"/></svg></div>
    <div class="app"><svg viewBox="0 0 42 42"><rect width="42" height="42" rx="9" fill="url(#gBlue)"/><path d="M18 9l14 22.500M24 9L12 28M6.500 26h17M28.500 26H36M10 31l-1 2.500" fill="none" stroke="#fff" stroke-width="3" stroke-linecap="round"/></svg></div>
    <div class="app"><svg viewBox="0 0 42 42"><rect width="42" height="42" rx="9" fill="url(#gMetal)"/><circle cx="21" cy="21" r="17.500" fill="#3c3c3d"/><circle cx="21" cy="21" r="13" fill="none" stroke="#a6a7a8" stroke-width="3"/><circle cx="21" cy="21" r="4" fill="#2a2a2b" stroke="#a6a7a8" stroke-width="2.500"/><path d="M17 21H8M23 24.500l5 8M23 17.500l5-8" stroke="#a6a7a8" stroke-width="3"/></svg><b class="badge">1</b></div>
    <div class="app run"><svg><use href="#miroI"/></svg></div>
    <div class="rule"></div>
    <div class="app run"><svg><use href="#codeI"/></svg></div>
    <div class="app run"><svg><use href="#sketchI"/></svg></div>
    <div class="app run"><svg viewBox="0 0 42 42"><rect width="42" height="42" rx="9" fill="#3a8ee8"/><rect x="3" y="3" width="36" height="36" rx="8" fill="none" stroke="#8cc4f6"/><path d="M17 8l13 22M24 8L11 30M5 26h30" fill="none" stroke="#a9d4fa" stroke-width="2.400"/><rect x="22" y="11" width="15" height="31" rx="2" fill="#101012" transform="rotate(24 29 26)"/><path d="M23 27l13 2M27 23l4 9" stroke="#ddd" stroke-width="2.400"/></svg></div>
    <div class="app run"><svg viewBox="0 0 42 42"><rect width="42" height="42" rx="9" fill="#7030a0"/><path d="M17 38v-6c-5 1-6-2-8-4M17 38C8 37 3 30 3 21 3 11 11 4 21 4s18 7 18 17c0 9-5 16-14 17v-8c0-2-.5-3-1.500-4 5-.6 8-3 8-8 0-2-.7-4-2-5.500.6-1.600.5-3.200 0-4.500-2 0-4 1.300-5 2-2.300-.6-4.700-.6-7 0-1-.7-3-2-5-2-.5 1.300-.6 2.900 0 4.500-1.300 1.500-2 3.500-2 5.500 0 5 3 7.400 8 8-1 1-1.500 2-1.500 4z" fill="#efedf2"/></svg></div>
    <div class="app run"><svg viewBox="0 0 42 42"><rect width="42" height="42" rx="9" fill="url(#gBlue)"/><circle cx="21" cy="21" r="17" fill="none" stroke="#fff" stroke-width="2.200"/><circle cx="21" cy="11" r="3.500" fill="#fff"/><path d="M10 15l8 2.500h6L32 15M19 17v8l-3 10M23 17v8l3 10" fill="none" stroke="#fff" stroke-width="3.400"/><circle cx="18" cy="14" r="10" fill="#bfe2fb" fill-opacity=".4" stroke="#7a7f86" stroke-width="1.600"/><path d="M26 25l13 18" stroke="#151515" stroke-width="4"/></svg></div>
    <div class="app run"><svg viewBox="0 0 42 42"><path d="M1 1l30-2 11 8v32l-31 3L1 32z" fill="#fff" stroke="#111" stroke-width="2"/><path d="M1 1l10 7v34L1 32z" fill="#111"/><path d="M11 8l31-1" stroke="#111" stroke-width="2"/><text x="26" y="35" text-anchor="middle" font-family="Liberation Serif, serif" font-size="27" font-weight="700" fill="#111">N</text></svg></div>
    <div class="app run"><svg viewBox="0 0 42 42"><rect width="42" height="42" rx="9" fill="#9fb0b4"/><rect x="1.500" y="1.500" width="39" height="39" rx="8" fill="#050505"/><rect x="4" y="4" width="34" height="34" rx="5" fill="#262626"/><text x="6" y="16" font-family="Liberation Mono, monospace" font-size="12" font-weight="700" fill="#eee">&gt;_</text></svg></div>
    <div class="app run"><svg><use href="#utmI"/></svg></div>
    <div class="app run"><svg><use href="#prevI"/></svg></div>
    <div class="app run"><svg><use href="#figI"/></svg></div>
    <div class="app run"><svg viewBox="0 0 42 42"><rect width="42" height="42" rx="9" fill="#f6f6f6"/><use href="#chr" width="42" height="42"/></svg></div>
    <div class="app run"><svg viewBox="0 0 42 42"><rect width="42" height="42" rx="9" fill="#5f6cf0"/><use href="#disc" x="6" y="9" width="30" height="24"/></svg></div>
    <div class="app run"><svg viewBox="0 0 42 42"><rect width="42" height="42" rx="9" fill="url(#gDark)"/><circle cx="21" cy="20" r="14" fill="#2a9df0" stroke="#d6dce2" stroke-width="5"/><circle cx="21" cy="20" r="7" fill="#58cdf6"/><path d="M21 21l15 15" stroke="#b9bfc6" stroke-width="6"/></svg></div>
    <div class="rule"></div>
    <div class="app"><svg viewBox="0 0 42 42"><path d="M3-2h35v12H3z" fill="#fdfdfd"/><path d="M1 3h40v10H1z" fill="#f1f1f1"/><path d="M-1 12h44v25H-1z" fill="#fff"/><path d="M18 0h5v2h-5zM14 7h4v2h-4zM24 7h4v2h-4z" fill="#333"/><circle cx="15" cy="25" r="5" fill="#f0b63a"/><circle cx="25" cy="20" r="5" fill="#e45a5a"/><path d="M18 25h16v8H12z" fill="#5a8be0"/><circle cx="34" cy="17" r="2.500" fill="#f7c878"/></svg></div>
    <div class="thumb"><svg viewBox="0 0 50 50"><path d="M0 5h50v37H0z" fill="#eef0f6"/><path d="M0 5h10v37H0z" fill="#c9d7ea"/><path d="M14 10h32v8H14z" fill="#8fa4cc"/><path d="M10 23h40v2H10z" fill="#48c8d8"/><path d="M14 29h16M14 33h12" stroke="#a99ad8" stroke-width="2"/><use href="#prevI" x="33" y="32" width="16" height="16"/></svg></div>
    <div class="thumb"><svg viewBox="0 0 50 50"><path d="M0 6h50v36H0z" fill="#e9e9ea"/><path d="M14 9h34v22H14z" fill="#c9c9d6"/><use href="#utmI" x="33" y="32" width="16" height="16"/></svg></div>
    <div class="thumb"><svg viewBox="0 0 50 50"><path d="M0 8h50v32H0z" fill="#0c2230"/><path d="M0 8h50v2H0z" fill="#ddd"/><path d="M8 14l6 20M40 12l-5 24M5 30l10-10M44 34l-6-12" stroke="#1d5a6c" stroke-width="2"/><path d="M18 21h14v8H18z" fill="#e8eef6"/><use href="#utmI" x="33" y="32" width="16" height="16"/></svg></div>
    <div class="thumb"><svg viewBox="0 0 50 50"><path d="M0 10h50v29H0z" fill="#fafafa"/><path d="M0 10h9v29H0z" fill="#ececec"/><path d="M0 14h9" stroke="#f1762f" stroke-width="2"/><path d="M15 21h22M15 15h10" stroke="#bbb" stroke-width="1.500"/><path d="M18 31h7v5h-7z" fill="#7ddba0"/><use href="#sketchI" x="33" y="32" width="16" height="16"/></svg></div>
    <div class="thumb"><svg viewBox="0 0 50 50"><path d="M0 14h50v19H0z" fill="#939393"/><path d="M0 14h50v3H0z" fill="#cfcfcf"/><path d="M22 19l5-1 3 8-6 4z" fill="#d85a6a"/><use href="#prevI" x="33" y="32" width="16" height="16"/></svg></div>
    <div class="thumb"><svg viewBox="0 0 50 50"><path d="M0 3h50v41H0z" fill="#f4f4f4"/><path d="M0 6h50v5H0z" fill="#b7b7b7"/><path d="M2 12h8v5H2zM12 12h8v5h-8zM22 12h8v5h-8z" fill="#1c1c20"/><path d="M32 11h18v6H32z" fill="#777"/><path d="M5 19h5v8H5zM22 19h4v8h-4zM32 20h8v5h-8zM5 31h5v7H5zM22 30h4v8h-4z" fill="#7a78cc"/><path d="M13 20h4v7h-4zM13 30h5v8h-5z" fill="#d68aa8"/><use href="#phI" x="33" y="32" width="16" height="16"/></svg></div>
    <div class="thumb"><svg viewBox="0 0 50 50"><path d="M0 11h50v25H0z" fill="#939393"/><path d="M0 11h50v3H0z" fill="#cfcfcf"/><path d="M21 17l8-2 4 3-5 17-9-3z" fill="#d7dcf8" stroke="#6e6ad0"/><use href="#prevI" x="33" y="32" width="16" height="16"/></svg></div>
    <div class="thumb"><svg viewBox="0 0 50 50"><path d="M0 14h50v19H0z" fill="#939393"/><path d="M0 14h50v3H0z" fill="#cfcfcf"/><path d="M20 20l6 2-2 7h-4z" fill="#e0a040"/><path d="M25 19h4v10h-4z" fill="#56406a"/><use href="#prevI" x="33" y="32" width="16" height="16"/></svg></div>
    <div class="thumb"><svg viewBox="0 0 50 50"><path d="M0 13h50v21H0z" fill="#939393"/><path d="M0 13h50v3H0z" fill="#cfcfcf"/><path d="M22 20l7 1 1 10-8-3z" fill="#a688d8"/><use href="#prevI" x="33" y="32" width="16" height="16"/></svg></div>
    <div class="thumb"><svg viewBox="0 0 50 50"><path d="M0 13h50v21H0z" fill="#939393"/><path d="M0 13h50v3H0z" fill="#cfcfcf"/><path d="M24 18l9 1-5 14-9-1z" fill="#b3a8ee"/><use href="#prevI" x="33" y="32" width="16" height="16"/></svg></div>
    <div class="thumb"><svg viewBox="0 0 50 50"><path d="M0 8h50v32H0z" fill="#e6e7e4"/><path d="M0 10h50v6H0z" fill="#bfd28a"/><path d="M16 21h5v4h-5z" fill="#444"/><path d="M25 20h9v6h-9z" fill="#f4f0c8"/><use href="#miroI" x="33" y="32" width="16" height="16"/></svg></div>
    <div class="thumb"><svg viewBox="0 0 50 50"><path d="M0 8h50v32H0z" fill="#1b1b1d"/><path d="M0 11h8v9H4v10h8v10H0zM40 12h10v20H40z" fill="#f0f0f0"/><path d="M18 19h7v6h-7zM28 19h7v6h-7zM18 14h7v3h-7zM18 28h7v6h-7z" fill="#f4f4f4"/><use href="#figI" x="33" y="32" width="16" height="16"/></svg></div>
    <div class="thumb"><svg viewBox="0 0 50 50"><path d="M0 14h50v19H0z" fill="#939393"/><path d="M0 14h50v3H0z" fill="#cfcfcf"/><path d="M19 23h12v5H19z" fill="#e8a060"/><path d="M23 20h4v4h-4z" fill="#c85a6a"/><use href="#prevI" x="33" y="32" width="16" height="16"/></svg></div>
    <div class="thumb"><svg viewBox="0 0 50 50"><path d="M0 8h50v32H0z" fill="#f3f6fa"/><path d="M0 10h11v30H0z" fill="#1d3048"/><path d="M15 14h14M15 19h16M15 24h12M15 29h16" stroke="#a8bcd8" stroke-width="1.500"/><path d="M40 9h10v3H40z" fill="#4a90e8"/><use href="#codeI" x="33" y="32" width="16" height="16"/></svg></div>
    <div class="thumb"><svg viewBox="0 0 50 50"><path d="M0 8h50v32H0z" fill="#f6f6f6"/><path d="M17 14h32v18H17z" fill="#555a60"/><path d="M19 17h28v13H19z" fill="#e2e5ea"/><path d="M3 13h9M3 18h11M3 23h9M3 28h10" stroke="#8ac6c8" stroke-width="2"/><use href="#safI" x="33" y="32" width="16" height="16"/></svg></div>
    <div class="app"><svg viewBox="0 0 42 42"><path d="M3 0h36l-4 42q-14 4-28 0z" fill="#dfdedd"/><path d="M10 4l3 38M21 4v39M32 4l-3 38" stroke="#cfcecd" stroke-width="2"/><path d="M3 2L9-3l6 3 7-3 6 4 5-3 6 4-3 5H6z" fill="#efefef" stroke="#777"/><path d="M12 1h5v4h-5zM25 1h5v4h-5z" fill="#555"/></svg></div>
  </footer>
</div>
</body>
</html>
```
FILE: styles.css
```css
* { box-sizing: border-box; }
body { margin: 0; font-family: Inter, "Liberation Sans", sans-serif; }
p, h1 { margin: 0; }
i, em { font-style: normal; }
svg { display: block; overflow: visible; flex: none; }
.defs { position: absolute; }
.desktop { position: relative; width: 3024px; height: 1964px; overflow: hidden; }
.wallpaper { position: absolute; inset: 0; width: 3024px; height: 1964px; overflow: hidden; }

/* Desktop shortcuts */
.shortcut { position: absolute; left: 2822px; width: 202px; }
.shortcut svg { width: 130px; height: 120px; }
.shortcut p { margin-top: 16px; text-align: right; font-size: 23px; font-weight: 600; line-height: 31px; color: #fff; white-space: nowrap; text-shadow: 0 2px 5px rgba(0,0,0,.65); }
.s1 { top: 97px; } .s1 p { padding-right: 69px; }
.s2 { top: 322px; } .s2 p { padding-right: 86px; }
.s3 { top: 545px; } .s3 p { padding-right: 95px; margin-top: 18px; }
.s4 { top: 767px; } .s4 p { padding-right: 38px; margin-top: 20px; margin-left: -60px; letter-spacing: .2px; }
.s4 p { direction: ltr; }
.s5 { top: 988px; } .s5 p { padding-right: 39px; margin-top: 22px; letter-spacing: .7px; }
.s6 { top: 1216px; } .s6 p { padding-right: 103px; margin-top: 18px; }
.s7 { top: 1439px; } .s7 p { padding-right: 17px; margin-top: 20px; }
.nudge { padding-right: 42px; }
.nudge2 { padding-right: 61px; }

.back-window { position: absolute; left: 96px; top: 82px; width: 2771px; height: 1800px; border-radius: 20px; background: #000; border-top: 2px solid #2c2c2c; }
.side-window { position: absolute; left: 0; top: 216px; width: 300px; height: 1440px; border-radius: 20px; background: #1d1e21; border: 1px solid #55565a; overflow: hidden; }
.side-window i { position: absolute; left: 23px; width: 80px; height: 80px; border-radius: 50%; background: #2e2f33; }
.side-window i:nth-child(1) { top: 23px; left: 22px; width: 26px; height: 26px; background: #636467; }
.side-window i:nth-child(2) { top: 82px; }
.side-window i:nth-child(3) { top: 322px; }
.side-window i:nth-child(4) { top: 434px; }
.side-pill { position: absolute; left: -10px; top: 428px; width: 18px; height: 80px; border-radius: 6px; background: #f2f2f2; }

/* Menu bar */
.menubar { position: relative; height: 74px; display: flex; align-items: center; padding: 0 33px 0 40px; font-size: 25px; font-weight: 500; color: #f1eef0; background: linear-gradient(90deg, #22091f 0, #23101c 48%, #3b2634 63%, #5d4757 78%, #7b6670 100%); text-shadow: 0 2px 4px rgba(0,0,0,.35); white-space: nowrap; }
.menu { display: grid; grid-template-columns: 66px 143px 84px 88px 100px 128px 175px 133px 84px 138px 80px; align-items: center; }
.menu b { font-weight: 700; letter-spacing: -.5px; }
.menu span { letter-spacing: -.15px; }
.apple { width: 26px; height: 32px; color: #eee; margin-top: -4px; }
.tray { margin-left: auto; display: flex; align-items: center; gap: 38px; margin-right: 31px; }
.tray svg { flex: none; }
.lang { width: 44px; height: 32px; border-radius: 6px; background: #eee; color: #4c3b49; font-size: 23px; font-weight: 700; line-height: 32px; text-align: center; text-shadow: none; }
.clock { display: flex; gap: 17px; font-size: 26px; letter-spacing: .12px; word-spacing: 1px; }

/* Browser window */
.window { position: absolute; left: 38px; top: 96px; width: 2842px; height: 1778px; border-radius: 20px; overflow: hidden; background: #fff; display: flex; flex-direction: column; filter: drop-shadow(0 14px 24px rgba(0,0,0,.5)); }
.tabstrip { flex: none; height: 84px; background: #dfe1e5; border-top: 2px solid #f5f6f7; display: flex; align-items: flex-end; }
.lights { width: 186px; display: flex; gap: 16px; padding-left: 42px; align-self: flex-start; padding-top: 29px; }
.lights i { width: 24px; height: 24px; border-radius: 50%; }
.r { background: #ed6a5f; } .y { background: #f5bf4f; } .g { background: #61c554; }
.tab { position: relative; width: 478.500px; height: 68px; display: flex; align-items: center; padding: 0 25px 0 24px; font-size: 24px; letter-spacing: -.05px; color: #3c4043; white-space: nowrap; }
.tab.active { background: #fff; border-radius: 16px 16px 0 0; }
.t1 { letter-spacing: -.12px; }
.tab.active::before, .tab.active::after { content: ""; position: absolute; bottom: 0; width: 16px; height: 16px; }
.tab.active::before { left: -16px; background: radial-gradient(circle at 0 0, transparent 16px, #fff 16.500px); }
.tab.active::after { right: -16px; background: radial-gradient(circle at 100% 0, transparent 16px, #fff 16.500px); }
.tab:not(.active)::after { content: ""; position: absolute; right: 0; top: 14px; width: 2px; height: 40px; background: #85888c; }
.fav { width: 32px; height: 20px; margin-right: 15px; }
.tab .close { width: 18px; height: 18px; margin-left: auto; margin-right: -3px; }
.plus { width: 24px; height: 24px; margin: 0 0 22px 33px; }
.tabs-more { width: 18px; height: 12px; margin: 0 35px 28px auto; }
.toolbar { flex: none; height: 74px; border-bottom: 2px solid #dadce0; display: flex; align-items: center; }
.navs { width: 216px; display: flex; gap: 36px; padding-left: 30px; color: #5f6368; }
.navs svg { width: 28px; height: 28px; }
.omnibox { width: 2410px; height: 56px; border-radius: 28px; background: #f1f3f4; display: flex; align-items: center; padding: 0 21px 0 26px; }
.lock { width: 20px; height: 26px; }
.url { margin: 0 auto 0 22px; font-size: 28px; color: #606469; letter-spacing: .25px; white-space: nowrap; }
.url b { font-weight: 400; color: #202124; letter-spacing: -.1px; }
.key { width: 30px; height: 18px; margin-right: 36px; }
.share { width: 24px; height: 30px; margin-right: 37px; }
.star { width: 30px; height: 30px; }
.panel { width: 28px; height: 28px; margin-left: 30px; }
.user { width: 44px; height: 44px; margin-left: 28px; border-radius: 50%; background: #dee1e6; display: grid; place-items: center; }
.user svg { width: 24px; height: 24px; }
.dots { width: 6px; height: 26px; margin-left: 39px; fill: #5f6368; }

/* Console header */
.appbar { position: relative; z-index: 2; flex: none; height: 100px; background: #fff; display: flex; align-items: center; box-shadow: 0 2px 8px rgba(0,0,0,.22); font-size: 24px; font-weight: 500; color: #333; white-space: nowrap; }
.burger { width: 100px; height: 100px; background: #f1762f; display: flex; flex-direction: column; justify-content: center; align-items: center; gap: 10px; }
.burger i { width: 40px; height: 4px; background: #fff; }
.brand { width: 300px; padding-left: 24px; }
.logo { display: flex; align-items: center; height: 44px; color: #f1762f; }
.logo svg { width: 55px; height: 34px; }
.logo span { display: block; width: 210px; margin-left: 9px; font-family: Roboto, sans-serif; font-size: 44px; line-height: 44px; font-weight: 400; letter-spacing: -1.500px; transform: scaleX(.825); transform-origin: 0 50%; }
.region { font-size: 19.200px; line-height: 24px; color: #181818; margin: 3px 0 0 1px; font-weight: 400; }
.sep { width: 2px; height: 36px; background: #e1e1e1; margin-left: 20px; }
.chip { height: 64px; background: #f4f5f7; display: flex; align-items: center; }
.wb { width: 203px; margin-left: 24px; padding-left: 18px; letter-spacing: -.15px; }
.wb svg { width: 24px; height: 26px; margin-right: 15px; }
.lj { width: 176px; margin-left: 24px; padding-left: 17px; letter-spacing: -.15px; }
.lj svg { width: 29px; height: 18px; margin-right: 12px; }
.spacer { flex: 1; }
.bills { width: 73px; } .tickets { width: 109px; letter-spacing: -.1px; }
.bell { position: relative; width: 67px; }
.bell svg { width: 24px; height: 28px; margin-top: -3px; }
.bell i { position: absolute; left: 20px; top: -13px; width: 12px; height: 12px; border-radius: 50%; background: #e63a3a; }
.ava { width: 56px; height: 56px; margin: 6px 48px 0 0; }

/* Body */
.body { position: relative; flex: 1; display: flex; align-items: flex-start; }
.sidebar { flex: none; width: 404px; height: 1513px; background: #f4f4f4; border-right: 2px solid #dcdcdc; font-size: 24px; color: #555; letter-spacing: -.1px; }
.side-title { height: 86px; line-height: 78px; padding-left: 32px; border-bottom: 2px solid #e6e6e6; font-size: 27px; font-weight: 500; letter-spacing: .5px; }
.item { height: 80px; display: flex; align-items: center; padding: 0 32px; white-space: nowrap; }
.item.first { height: 82px; }
.item.second { height: 94px; }
.item.third { height: 81px; }
.item.sub { padding-left: 80px; }
.item.on { background: #dedede; color: #333; font-weight: 500; letter-spacing: .15px; }
.item.between { justify-content: space-between; padding-right: 30px; }
.item .caret { width: 16px; height: 10px; margin-right: 6px; }
.item.two { line-height: 36px; }
.ext { width: 22px; height: 22px; margin-left: 9px; }
.content { flex: none; width: 2326px; margin-left: 48px; font-size: 24px; color: #333; white-space: nowrap; }
.crumbs { height: 100px; display: flex; align-items: center; letter-spacing: -.08px; }
.crumbs i { color: #888; margin: 0 16px 0 18px; }
.crumbs em { color: #8a8a8a; letter-spacing: .12px; }
.crumbs .reg { margin-left: 30px; letter-spacing: -.3px; }
.crumbs svg { width: 18px; height: 12px; margin-left: 10px; }
.crumbs a { margin-left: auto; margin-top: -2px; letter-spacing: -.3px; }
h1 { height: 46px; line-height: 46px; font-size: 47px; font-weight: 500; color: #111; letter-spacing: .8px; }
.tabs { margin-top: 51px; height: 64px; display: flex; border-bottom: 2px solid #dedede; font-size: 28px; color: #555; letter-spacing: -.12px; }
.tabs span { height: 64px; line-height: 65px; padding: 0 32px; }
.tabs .cur { width: 314px; color: #2c6dc6; border-bottom: 4px solid #2c6dc6; font-weight: 500; letter-spacing: -.1px; }
.filters { margin-top: 32px; height: 64px; display: flex; color: #555; }
.filters > * { height: 64px; display: flex; align-items: center; }
.primary { width: 386px; border: 0; padding: 0; justify-content: center; font: inherit; color: #fff; background: #2c6dc6; box-shadow: 0 4px 0 rgba(0,0,0,.04); letter-spacing: .08px; }
.select { width: 241px; margin-left: 16px; border: 2px solid #dedede; padding: 0 24px 0 21px; justify-content: space-between; }
.select svg { width: 22px; height: 14px; color: #b4b4b4; }
.input { width: 460px; margin-left: -2px; border: 2px solid #dedede; padding-left: 20px; color: #bfbfbf; letter-spacing: .1px; }
.search { width: 141px; margin-left: -2px; border: 2px solid #dedede; background: #fafafa; justify-content: center; }
.refresh { width: 88px; margin-left: auto; border: 2px solid #dedede; background: #fafafa; justify-content: center; }
.refresh svg { width: 26px; height: 26px; color: #555; }
.table { position: relative; margin-top: 16px; }
.row { height: 254px; border-bottom: 2px solid #dedede; display: grid; grid-template-columns: 600px 300px 500px 500px 46px 380px; line-height: 40px; }
.row > div { padding: 2px 0 0 32px; display: flex; align-items: center; overflow: hidden; }
.row.head { height: 99px; background: #fafafa; color: #666; letter-spacing: -.08px; }
.row a { color: #2c6dc6; }
.st svg { width: 20px; height: 26px; margin-left: 1px; }
.st .dot { width: 28px; height: 28px; margin: 0 15px 0 0; }
.ag { display: inline-block; margin: 0 14px 0 15px; letter-spacing: -.1px; }
.id1 { letter-spacing: -.12px; }
.gid { letter-spacing: -.6px; }
.tight { letter-spacing: -.33px; }
.times { letter-spacing: -.25px; }
.sg { letter-spacing: -.2px; }
.sr { letter-spacing: -.15px; }
.row > .act { flex-direction: column; align-items: flex-start; justify-content: center; padding-left: 34px; }
.row.head > .act { padding-left: 32px; }
.al { height: 63.500px; display: flex; align-items: center; letter-spacing: -.2px; }
.al.wide { letter-spacing: .15px; }
.al i { width: 2px; height: 22px; background: #dedede; margin: 0 17px 0 19px; }
.al.last { letter-spacing: .1px; }
.al.last i { margin-left: 14px; }
.fixed-shadow { position: absolute; left: 1932px; top: 0; width: 14px; height: 604px; background: linear-gradient(270deg, rgba(0,0,0,.12), rgba(0,0,0,.04) 50%, rgba(0,0,0,0)); }
.pager { margin-top: 32px; height: 64px; display: flex; justify-content: flex-end; align-items: center; padding-right: 16px; color: #555; }
.total { margin-top: -2px; }
.pg { width: 64px; height: 64px; border: 2px solid #dedede; margin-left: 16px; display: grid; place-items: center; }
.pg.cur { border-color: #2c6dc6; color: #2c6dc6; }
.pg svg { width: 14px; height: 22px; color: #b8b8b8; }
.pg.next svg { transform: scaleX(-1); }
.size { width: 181px; height: 64px; border: 2px solid #dedede; margin-left: 32px; padding-left: 22px; display: flex; align-items: center; word-spacing: 2px; }
.size svg { width: 20px; height: 14px; margin-left: 4px; color: #b4b4b4; }
.handle { position: absolute; left: 404px; top: 689px; width: 36px; height: 124px; }
.scrollbar { position: absolute; right: 0; top: 9px; bottom: 0; width: 16px; border-radius: 8px 8px 0 0; background: #c2c6d0; }
.fade { position: absolute; left: 0; right: 0; bottom: 0; height: 80px; background: linear-gradient(180deg, rgba(0,0,0,0), rgba(0,0,0,.11)); }

/* Dock */
.dock { position: absolute; left: 38px; top: 1880px; width: 2948px; height: 74px; border-radius: 22px; border: 2px solid rgba(255,255,255,.2); padding-left: 4px; display: flex; background: linear-gradient(90deg, #cbcbcb 0, #b9b7b6 5%, #bdbab9 22%, #b4a7a6 26%, #8a7a80 28.500%, #635b69 32%, #655b69 48%, #725f72 63%, #76657a 69%, #6d6d6d 75%, #7d7e7a 84%, #64605f 91%, #b86060 95%, #e96a60 97.500%, #ef7058 100%); }
.app, .thumb { position: relative; flex: none; width: 56.570px; display: flex; justify-content: center; }
.app > svg { width: 42px; height: 42px; margin-top: 11px; }
.thumb > svg { width: 50px; height: 50px; margin-top: 8px; }
.app.run::after { content: ""; position: absolute; left: 25px; top: 62px; width: 6px; height: 6px; border-radius: 50%; background: #0a0a0a; }
.badge { position: absolute; left: 34px; top: 5px; width: 20px; height: 20px; border-radius: 50%; background: #e8564a; color: #fff; font-size: 12px; font-weight: 500; line-height: 20px; text-align: center; letter-spacing: -.5px; }
.rule { flex: none; width: 2px; height: 54px; margin: 8px 12px 0 11px; background: rgba(30,20,35,.6); }
```
